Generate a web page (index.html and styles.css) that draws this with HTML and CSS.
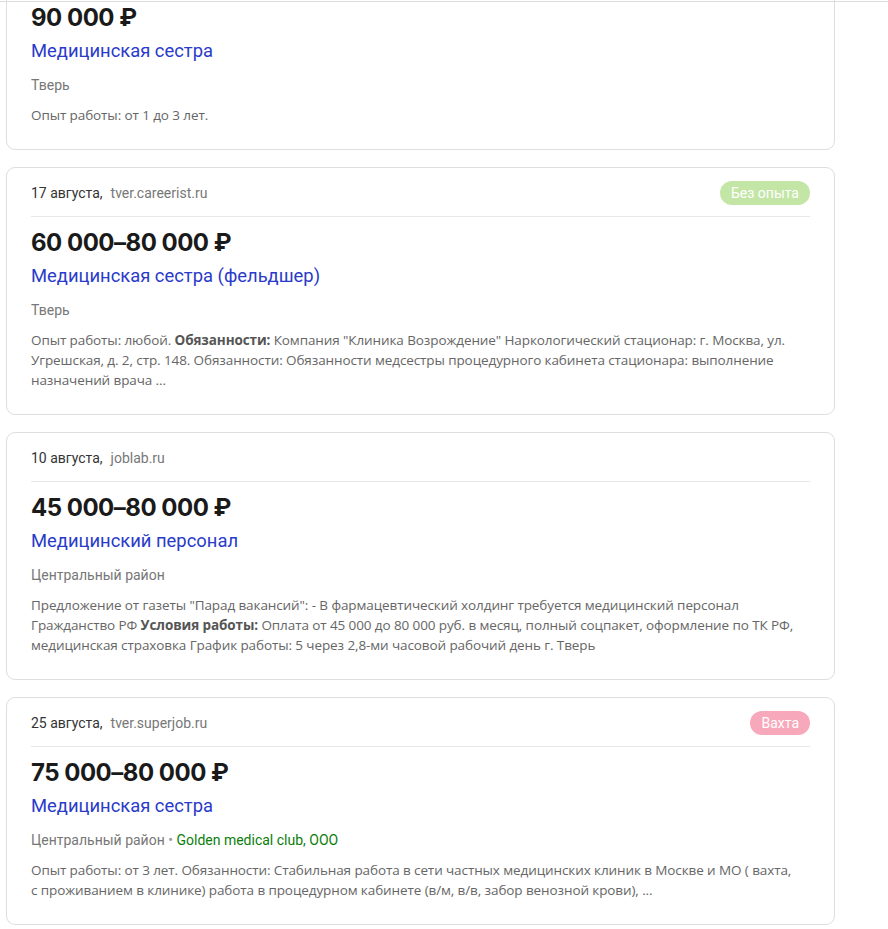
FILE: index.html
```html
<!DOCTYPE html>
<html lang="ru">
    <head>
        <meta charset="UTF-8" />
        <meta content="width=device-width, initial-scale=1.0" name="viewport" />
        <title>Вакансии</title>
        <link rel="stylesheet" href="styles.css">
    </head>

    <body>
        <div class="top-line"></div>
        <div class="list">
            <div class="card">
                <div class="card-head">
                    <span class="date">5 августа,</span>
                    <span class="source">tver.trudvsem.ru</span>
                </div>
                <div class="salary">90 000 ₽</div>
                <a class="title" href="#">Медицинская сестра</a>
                <div class="place">Тверь</div>
                <div class="desc">Опыт работы: от 1 до 3 лет.</div>
            </div>

            <div class="card">
                <div class="card-head">
                    <span class="date">17 августа,</span>
                    <span class="source">tver.careerist.ru</span>
                    <span class="badge badge-green">Без опыта</span>
                </div>
                <div class="salary">60 000–80 000 ₽</div>
                <a class="title" href="#">Медицинская сестра (фельдшер)</a>
                <div class="place">Тверь</div>
                <div class="desc">Опыт работы: любой. <b>Обязанности:</b> Компания "Клиника Возрождение" Наркологический стационар: г. Москва, ул. Угрешская, д. 2, стр. 148. Обязанности: Обязанности медсестры процедурного кабинета стационара: выполнение назначений врача ...</div>
            </div>

            <div class="card">
                <div class="card-head">
                    <span class="date">10 августа,</span>
                    <span class="source">joblab.ru</span>
                </div>
                <div class="salary">45 000–80 000 ₽</div>
                <a class="title" href="#">Медицинский персонал</a>
                <div class="place">Центральный район</div>
                <div class="desc">Предложение от газеты "Парад вакансий": - В фармацевтический холдинг требуется медицинский персонал Гражданство РФ <b>Условия работы:</b> Оплата от 45 000 до 80 000 руб. в месяц, полный соцпакет, оформление по ТК РФ, медицинская страховка График работы: 5 через 2,8-ми часовой рабочий день г. Тверь</div>
            </div>

            <div class="card">
                <div class="card-head">
                    <span class="date">25 августа,</span>
                    <span class="source">tver.superjob.ru</span>
                    <span class="badge badge-pink">Вахта</span>
                </div>
                <div class="salary">75 000–80 000 ₽</div>
                <a class="title" href="#">Медицинская сестра</a>
                <div class="place">Центральный район <span class="dot">•</span> <span class="company">Golden medical club, ООО</span></div>
                <div class="desc">Опыт работы: от 3 лет. Обязанности: Стабильная работа в сети частных медицинских клиник в Москве и МО ( вахта, с проживанием в клинике) работа в процедурном кабинете (в/м, в/в, забор венозной крови), ...</div>
            </div>
        </div>
    </body>
</html>
```

FILE: styles.css
```css
html {
    background-color: #fff;
}

body {
    margin: 0;
    font-family: Roboto, "Liberation Sans", sans-serif;
    color: #222;
}

.top-line {
    position: fixed;
    top: 1px;
    left: 0;
    right: 0;
    height: 1px;
    background-color: #dcdcdc;
}

.list {
    display: flex;
    flex-direction: column;
    gap: 17px;
    width: 829px;
    margin: -58px 0 0 6px;
}

.card {
    display: flex;
    flex-direction: column;
    border: 1px solid #dedede;
    border-radius: 9px;
    padding: 13px 24px 24px 24px;
}

.card-head {
    display: flex;
    align-items: center;
    height: 24px;
    padding-bottom: 11px;
    border-bottom: 1px solid #e8e8e8;
    margin-bottom: 10px;
    font-size: 14px;
}

.date {
    color: #333;
}

.source {
    color: #777;
    margin-left: 8px;
}

.badge {
    margin-left: auto;
    height: 24px;
    line-height: 24px;
    padding: 0 11px;
    border-radius: 12px;
    color: #fff;
    font-size: 14px;
}

.badge-green {
    background-color: #c3e6a6;
}

.badge-pink {
    background-color: #f8a8bb;
}

.salary {
    font-family: Inter, Roboto, sans-serif;
    font-size: 24px;
    line-height: 32px;
    font-weight: 700;
    color: #1a1a1a;
    letter-spacing: -0.5px;
}

.title {
    font-size: 18.4px;
    line-height: 26px;
    margin-top: 4px;
    color: #2a3bc9;
    text-decoration: none;
}

.place {
    font-size: 14px;
    line-height: 20px;
    margin-top: 11px;
    color: #777;
}

.dot {
    color: #999;
}

.company {
    color: #0a7d0a;
}

.desc {
    max-width: 764px;
    font-family: "Open Sans", "Liberation Sans", sans-serif;
    font-size: 13.5px;
    line-height: 20px;
    margin-top: 10px;
    color: #666;
    letter-spacing: -0.1px;
}

.desc b {
    font-weight: 700;
    color: #555;
}
```
